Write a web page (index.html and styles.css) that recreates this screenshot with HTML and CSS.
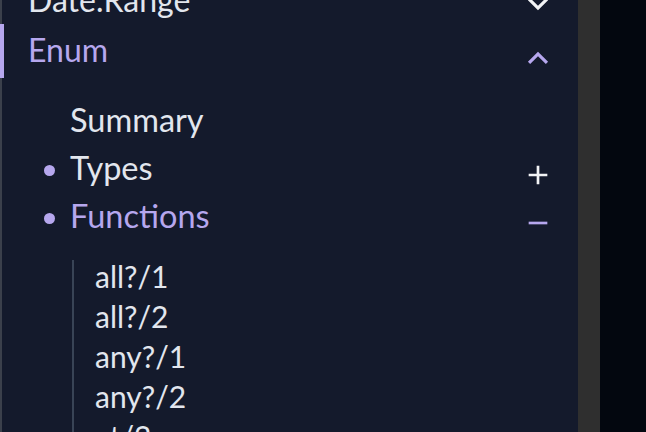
FILE: index.html
```html
<!DOCTYPE html>
<html lang="en">
<head>
<meta charset="utf-8">
<title>Enum sidebar</title>
<link rel="stylesheet" href="styles.css">
</head>
<body>
<div class="app">
  <aside class="sidebar">
    <ul class="nav">
      <li class="nav-item first">
        <div class="row">
          <span class="label">Date.Range</span>
          <svg class="chev" viewBox="0 0 24 24"><path d="M12 13.1717L16.9497 8.22192L18.3639 9.63614L12 16.0001L5.63599 9.63614L7.0502 8.22192L12 13.1717Z"/></svg>
        </div>
      </li>
      <li class="nav-item active">
        <div class="row">
          <span class="label">Enum</span>
          <svg class="chev" viewBox="0 0 24 24"><path d="M12 10.8284L7.05029 15.7782L5.63608 14.364L12 8L18.364 14.364L16.9498 15.7782L12 10.8284Z"/></svg>
        </div>
        <ul class="sub">
          <li class="sub-row">
            <span class="dot none"></span>
            <span class="sub-label">Summary</span>
          </li>
          <li class="sub-row">
            <span class="dot"></span>
            <span class="sub-label">Types</span>
            <svg class="pm" viewBox="0 0 24 24"><path d="M11 11V5H13V11H19V13H13V19H11V13H5V11H11Z"/></svg>
          </li>
          <li class="sub-row open">
            <span class="dot"></span>
            <span class="sub-label">Functions</span>
            <svg class="pm" viewBox="0 0 24 24"><path d="M5 11V13H19V11H5Z"/></svg>
          </li>
          <li class="fn-wrap">
            <ul class="fn">
              <li>all?/1</li>
              <li>all?/2</li>
              <li>any?/1</li>
              <li>any?/2</li>
              <li>at/2</li>
              <li>at/3</li>
            </ul>
          </li>
        </ul>
      </li>
    </ul>
  </aside>
  <div class="scrollbar"></div>
  <main class="content"></main>
</div>
</body>
</html>
```

FILE: styles.css
```css
* { box-sizing: border-box; }
html, body { margin: 0; padding: 0; }
body {
  background: #03070f;
  font-family: "Lato", "Open Sans", sans-serif;
  color: #e2e6ee;
  width: 646px;
  height: 432px;
  overflow: hidden;
}
ul { list-style: none; margin: 0; padding: 0; }
.app {
  display: flex;
  height: 432px;
  overflow: hidden;
}
.sidebar {
  width: 578px;
  flex: none;
  height: 432px;
  background: #141a2c;
  border-left: 2px solid #3b404b;
}
.scrollbar {
  width: 22px;
  flex: none;
  background: #2f2f2f;
}
.content {
  flex: 1;
  background: #03070f;
}
.row {
  display: flex;
  justify-content: space-between;
  align-items: flex-start;
  height: 54px;
  padding-left: 26px;
  padding-right: 21px;
  font-size: 32px;
}
.label { line-height: 52px; }
.chev { width: 38px; height: 38px; fill: #f2f3f5; margin-top: 15px; }
.first .row { height: 49px; margin-top: -25px; }
.first .label { line-height: 49px; }
.first .chev { margin-top: 10px; }
.active .row {
  margin-left: -2px;
  border-left: 4px solid #b6a7ee;
  padding-left: 24px;
  color: #b6a7ee;
}
.active .row .chev { fill: #b6a7ee; }
.sub { padding-top: 18px; }
.sub-row {
  display: flex;
  align-items: flex-start;
  height: 48px;
  padding-left: 42px;
  padding-right: 24px;
  font-size: 32.5px;
  line-height: 48px;
}
.dot {
  width: 11px;
  height: 11px;
  border-radius: 50%;
  background: #b6a7ee;
  margin-top: 21px;
  margin-right: 15px;
  flex: none;
}
.dot.none { visibility: hidden; }
.sub-label { flex: 1; }
.pm { width: 32px; height: 32px; fill: #f2f3f5; margin-top: 15px; }
.open { color: #b6a7ee; }
.open .pm { fill: #b6a7ee; }
.fn-wrap { padding-top: 20px; padding-left: 70px; }
.fn {
  border-left: 2px solid #394456;
  padding-left: 21px;
  display: flex;
  flex-direction: column;
  gap: 8px;
  font-size: 30px;
}
.fn li { line-height: 32px; height: 32px; }
```
